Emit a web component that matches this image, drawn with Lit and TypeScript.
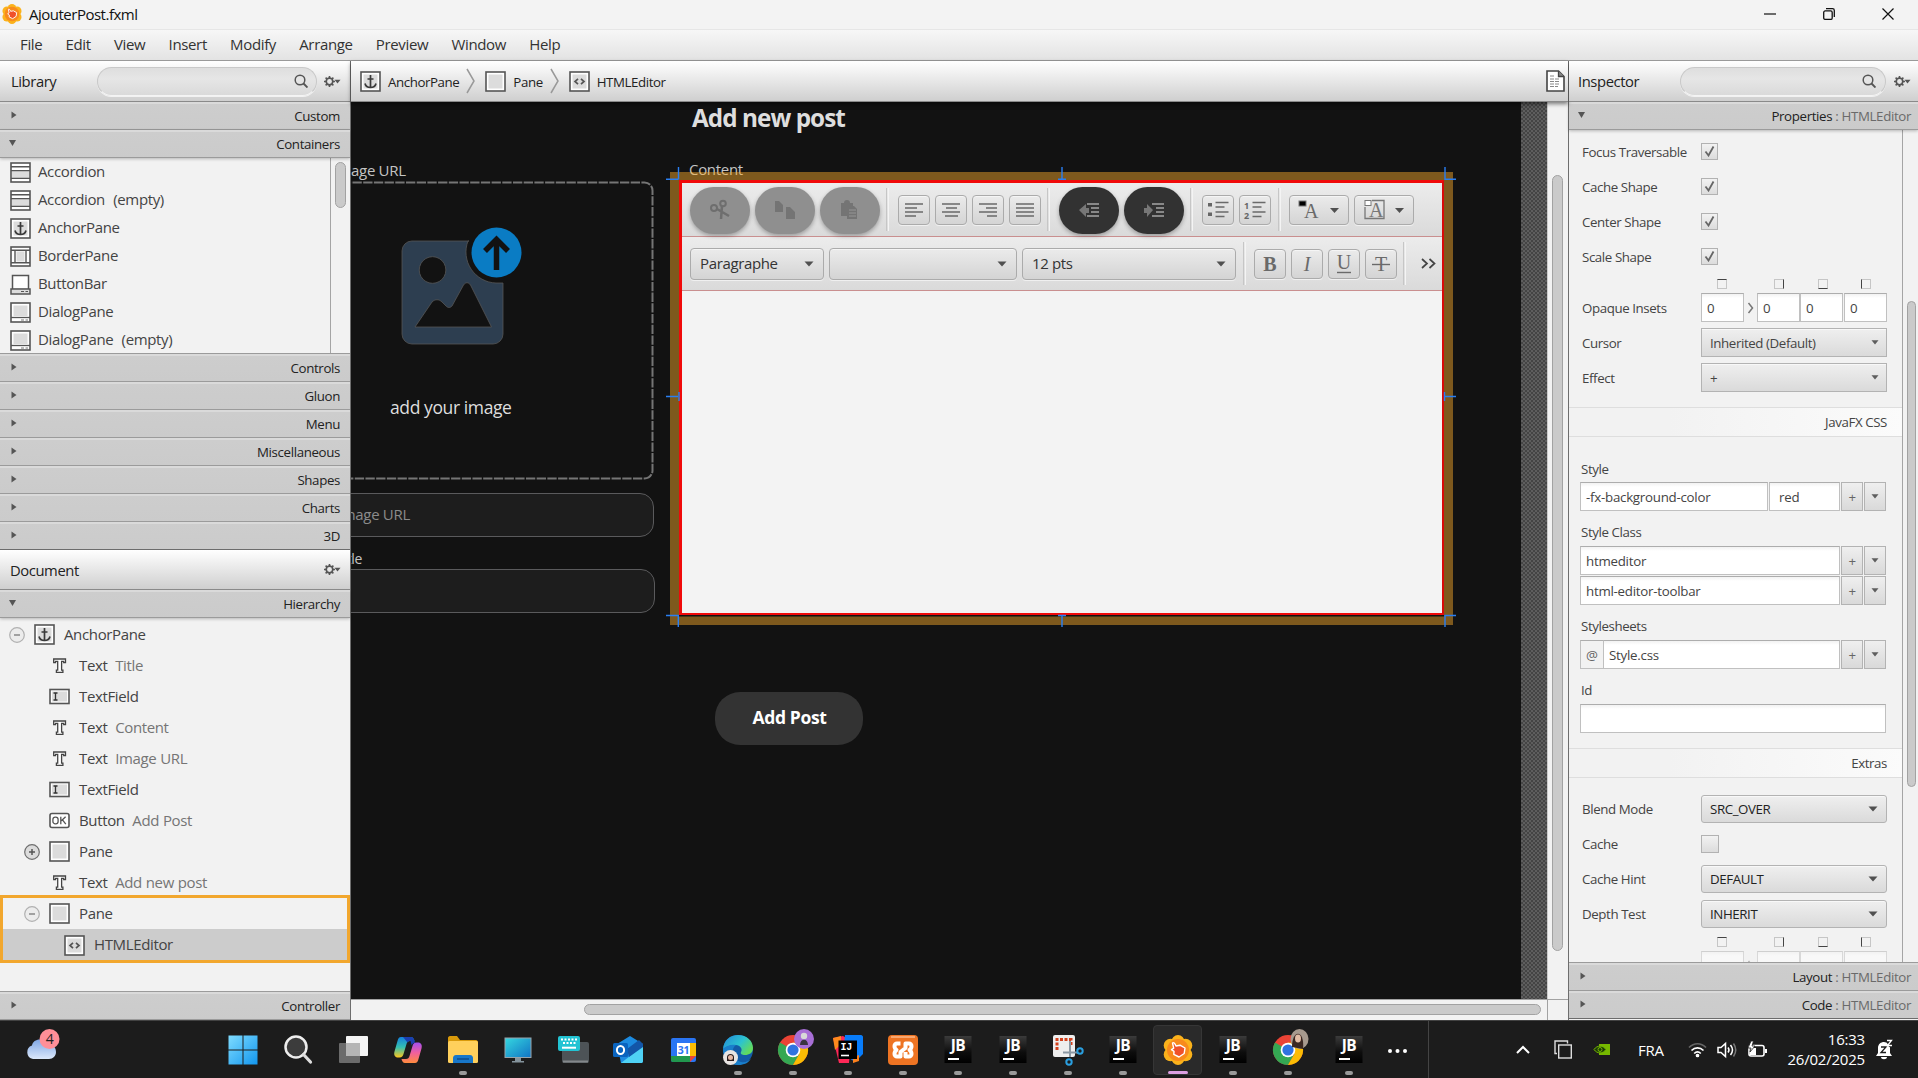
import { LitElement, html, css, svg, nothing } from "lit";
import { customElement, property } from "lit/decorators.js";

type Kind =
  | "accordion" | "anchor" | "border" | "buttonbar" | "dialog"
  | "pane" | "editor" | "text" | "field" | "button";

const glyph = (k: Kind) => {
  const frame = svg`<rect x="1" y="1" width="19" height="19" fill="#fff" stroke="#555" stroke-width="1.6"/>`;
  const inner = svg`<rect x="3.5" y="3.5" width="14" height="14" fill="#dcdcdc"/>`;
  switch (k) {
    case "accordion":
      return svg`${frame}<rect x="2" y="9" width="17" height="7" fill="#dcdcdc"/>
        <path d="M1 4.7h19M1 8.6h19M1 16.4h19" stroke="#555" stroke-width="1.4"/>`;
    case "anchor":
      return svg`${frame}${inner}<path d="M10.5 4v12.5M7.5 8h6M5 12.5c.6 2.600 2.600 4 5.500 4s4.900-1.400 5.500-4" fill="none" stroke="#3a3a3a" stroke-width="1.7"/>`;
    case "border":
      return svg`${frame}<rect x="6.500" y="5.500" width="8" height="10" fill="#dcdcdc"/>
        <path d="M1 4.200h19M1 16.800h19M5 4.200v12.600M16 4.200v12.600" stroke="#555" stroke-width="1.400"/>`;
    case "buttonbar":
      return svg`<rect x="2.500" y="1.500" width="16" height="14" fill="#fff" stroke="#555" stroke-width="1.500"/>
        <rect x="1" y="15" width="19" height="5" fill="#dcdcdc" stroke="#555" stroke-width="1.500"/><path d="M11 17.500h3M15.500 17.500h2.500" stroke="#555"/>`;
    case "dialog":
      return svg`${frame}<rect x="3.500" y="3.500" width="14" height="10.500" fill="#dcdcdc"/>
        <path d="M1 15.500h19" stroke="#555" stroke-width="1.300"/><path d="M11 18h3M15.500 18h2.500" stroke="#777"/>`;
    case "pane":
      return svg`${frame}${inner}`;
    case "editor":
      return svg`${frame}${inner}<path d="M9 7.800 6 10.500l3 2.700M12 7.800l3 2.700-3 2.700" fill="none" stroke="#555" stroke-width="1.700"/>`;
    case "text":
      return svg`<path d="M4.700 4h11.800v3.600h-1.800V6.400h-2.100v8.800h1.300v2.100H7.400v-2.100h1.300V6.400H6.500v1.200H4.700z" fill="#fff" stroke="#444" stroke-width="1.300"/>`;
    case "field":
      return svg`<rect x="1" y="3.500" width="19" height="14" fill="#fff" stroke="#555" stroke-width="1.600"/>
        <rect x="3" y="5.500" width="15" height="10" fill="#dcdcdc"/><path d="M4.500 7h4M6.500 7v7M4.500 14h4" stroke="#333" stroke-width="1.300"/>`;
    case "button":
      return svg`<rect x="1" y="3.500" width="19" height="14" rx="2" fill="#fff" stroke="#555" stroke-width="1.600"/>
        <rect x="3.900" y="7.200" width="5.200" height="6.600" rx="2.400" fill="none" stroke="#555" stroke-width="1.300"/>
        <path d="M11.800 6.800v7.400M16.600 6.800l-4.200 4M13.500 9.800l3.300 4.400" fill="none" stroke="#555" stroke-width="1.300"/>`;
  }
};

const icon = (k: Kind) => html`<svg class="ico" viewBox="0 0 21 21" width="21" height="21">${glyph(k)}</svg>`;

const gear = html`<svg class="gear" width="17" height="13" viewBox="0 0 17 13">
  <circle cx="5.500" cy="6.500" r="3.300" fill="none" stroke="#555" stroke-width="1.700"/>
  <path d="M5.500 1v2M5.500 10v2M0 6.500h2M9 6.500h2M1.600 2.600 3 4M8 9l1.400 1.400M9.400 2.600 8 4M3 9l-1.400 1.400" stroke="#555" stroke-width="1.600"/>
  <path d="M10.500 4.800h6l-3 3.800z" fill="#555"/></svg>`;

const lens = html`<svg class="lens" width="14" height="14" viewBox="0 0 14 14">
  <circle cx="6" cy="6" r="4.800" fill="none" stroke="#555" stroke-width="1.500"/><path d="m9.500 9.500 4 4" stroke="#555" stroke-width="1.900"/></svg>`;

const chrome = svg`<circle cx="15" cy="15" r="15" fill="#ea4335"/>
  <path d="M15 15 2 7.500A15 15 0 0 0 15 30l6.500-11.300z" fill="#34a853"/>
  <path d="M15 15l6.500 3.800L15 30A15 15 0 0 0 28 7.500H15z" fill="#fbbc04"/>
  <circle cx="15" cy="15" r="7.300" fill="#fff"/><circle cx="15" cy="15" r="5.600" fill="#2f73e0"/>`;

const flower = svg`<g fill="#fbb21b"><circle cx="15" cy="6.500" r="6.500"/><circle cx="15" cy="23.500" r="6.500"/><circle cx="7.500" cy="10.500" r="6.800"/><circle cx="22.500" cy="10.500" r="6.800"/><circle cx="7.500" cy="19.500" r="6.800"/><circle cx="22.500" cy="19.500" r="6.800"/></g>
  <circle cx="15" cy="15" r="11" fill="#f88a1c"/>
  <path d="M9.500 8c1-1 2.300 0 3.500 3l4-.8 5 2.800-.8 5.500-5.200 3.500-5.200-2.600.2-3-2.500-1.800 2.200-1.400z" fill="#f0512a" stroke="#fff" stroke-width="1.400" stroke-linejoin="round"/>`;

const TASKS: Record<string, unknown> = {
  start: svg`<defs><linearGradient id="w" x2="1" y2="1"><stop stop-color="#7fdcff"/><stop offset="1" stop-color="#1296ee"/></linearGradient></defs>
    <path d="M.5.500h14v14H.5zM15.500.500h14v14h-14zM.500 15.500h14v14H.500zM15.500 15.500h14v14h-14z" fill="url(#w)"/>`,
  search: svg`<circle cx="13" cy="12" r="10.500" fill="#3c3c3c" stroke="#eee" stroke-width="2.500"/><path d="m20.500 19.500 7 7.500" stroke="#ddd" stroke-width="3.200" stroke-linecap="round"/>`,
  view: svg`<rect x="1" y="8" width="21" height="20" rx="1" fill="#6b6b6b"/><rect x="8" y="1" width="22" height="20" rx="1" fill="#f4f4f4"/><path d="M8 8h14v13H8z" fill="#b5b5b5"/>`,
  copilot: svg`<defs><linearGradient id="c1" x2="0" y2="1"><stop stop-color="#1480dd"/><stop offset=".5" stop-color="#35c0b0"/><stop offset="1" stop-color="#ffc61b"/></linearGradient>
    <linearGradient id="c2" x2="0" y2="1"><stop stop-color="#a34ff0"/><stop offset=".5" stop-color="#f0609e"/><stop offset="1" stop-color="#ff8b3d"/></linearGradient></defs>
    <path d="M8 2h10c2 0 3 2 3.500 4H17c-2 0-3 1-3.500 3l-3 10c-.7 2-1.500 3.500-4 3.500H5c-3 0-4.500-2.500-3.500-6L4.500 6C5.200 3.300 6 2 8 2z" fill="url(#c1)"/>
    <path d="M22 28H12c-2 0-3-2-3.500-4H13c2 0 3-1 3.500-3l3-10c.7-2 1.500-3.500 4-3.500H25c3 0 4.500 2.500 3.500 6l-3 10.500c-.7 2.700-1.500 4-3.500 4z" fill="url(#c2)"/>
    <path d="M10 2h8c2 0 3 2 3.500 4l.7 1.700c-2.200.3-3 1.300-3.500 2.800L17.500 6c-1.500 0-2.500.500-3 1.500z" fill="#1b3fb0"/>`,
  folder: svg`<path d="M0 3c0-1 .8-2 2-2h7l3 4h16c1 0 2 1 2 2v4H0z" fill="#d99a0b"/><rect y="6" width="30" height="22" rx="1.500" fill="#ffd05c"/><path d="M5 28v-5c0-1.500 1-3 3-3h14c2 0 3 1.500 3 3v5z" fill="#1877c9"/><path d="M9 24h12" stroke="#0b4b8c" stroke-width="1.500"/>`,
  monitor: svg`<defs><linearGradient id="m" x2="1" y2="1"><stop stop-color="#35d8e0"/><stop offset="1" stop-color="#1173c4"/></linearGradient></defs>
    <path d="M12 22h6v4h3v1.500H9V26h3z" fill="#84939c"/><rect x="2" y="3" width="26" height="19.500" fill="url(#m)" stroke="#98a4ab" stroke-width="1"/>`,
  keys: svg`<rect x="4" y="7" width="27" height="21" rx="2" fill="#4d5357"/><path d="M5 26.500h25" stroke="#84888b" stroke-width="2"/>
    <rect x="0" y="1" width="22" height="15" rx="2" fill="#22c3d3"/><path d="M3 4.500h16M5 8h13" stroke="#fff" stroke-width="2" stroke-dasharray="2 1.500"/><path d="M4 12.700h14" stroke="#fff" stroke-width="2"/>`,
  outlook: svg`<path d="M4 9 17 1l13 8v17c0 1.500-1 2-2 2H8z" fill="#1c8be0"/><path d="m8 28 22-17v15c0 1.500-1 2-2 2z" fill="#4fd2f5"/><path d="M14 14 26 5l4 4v3L16 22z" fill="#1356a8"/><rect x="0" y="8" width="15" height="14" rx="1.500" fill="#0a64bf"/><ellipse cx="7.500" cy="15" rx="3.600" ry="4" fill="none" stroke="#fff" stroke-width="2"/>`,
  calendar: svg`<rect x="3" y="3" width="25" height="24" rx="2" fill="#2a75f3"/><path d="M22 8h6v13h-6z" fill="#fbbc04"/><path d="M3 21h19v6H5c-1.200 0-2-.8-2-2z" fill="#21974e"/><path d="M22 21h6l-6 6z" fill="#ea4335"/><path d="M9 8h13v13H9z" fill="#fff"/><text x="15.500" y="18.500" text-anchor="middle" class="cal">31</text>`,
  edge: svg`<defs><linearGradient id="e" x2="1" y2=".6"><stop stop-color="#2387d8"/><stop offset=".6" stop-color="#2cc3d0"/><stop offset="1" stop-color="#62db5c"/></linearGradient></defs>
    <circle cx="15" cy="15" r="15" fill="#135ca8"/><path d="M0 14C1 5 7 0 15 0c9 0 15 6 15 13 0 5-4 7-8 7-3 0-5-1-4-3 2-3-1-7-5-7-5 0-9 1-13 4z" fill="url(#e)"/>
    <path d="M13 10c-5 3-5 14 5 17 4 1 8-1 10-4-2 5-7 7-13 7C6 30 0 23 0 14c3-3 8-5 13-4z" fill="#1a7fcb"/>
    <circle cx="7.500" cy="22.500" r="7.500" fill="#e9e4e2"/><path d="M4 22c0-4 7-4 7 0v4H4z" fill="#2a1d1d"/><circle cx="7.500" cy="22.500" r="2.500" fill="#e6b8a4"/>`,
  chromeA: svg`${chrome}<circle cx="26" cy="4" r="10" fill="#a86fd6"/><circle cx="26" cy="1" r="3.200" fill="#d8d8d8"/><path d="M22 10c0-7 8-7 8 0z" fill="#3a3440"/>`,
  idea: svg`<path d="M0 3 10 1l8 5-2 22-10 0z" fill="#fe2857"/><path d="M0 3 8 1v8L2 15z" fill="#ff8a1d"/><path d="M12 0h16c1 0 2 1 2 2v17l-8 8-12-8z" fill="#087cfa"/><path d="m20 22 6-2v6l-6 2z" fill="#fc801d"/><rect x="5.500" y="5.500" width="18.500" height="18.500" fill="#000"/><text x="7.500" y="15" class="ij">IJ</text><path d="M8 20.500h8" stroke="#fff" stroke-width="1.600"/>`,
  xampp: svg`<rect width="30" height="30" rx="4" fill="#ee7423"/><path d="M3 2h24" stroke="#fbb98b" stroke-width="1.500"/><path d="M12.500 8.500H9a2.500 2.500 0 0 0-2.500 2.500c0 2 .500 3 2 4-1.500 1-2 2-2 4A2.500 2.500 0 0 0 9 21.500h3.500V17l5-4V8.500H21a2.500 2.500 0 0 1 2.500 2.500c0 2-.5 3-2 4 1.500 1 2 2 2 4a2.500 2.500 0 0 1-2.500 2.500h-3.500V17" fill="none" stroke="#fff" stroke-width="4" stroke-linejoin="round"/>`,
  jb: svg`<defs><linearGradient id="j" x2="0" y2="1"><stop stop-color="#3b3b3b"/><stop offset=".6" stop-color="#0d0d0d"/><stop offset="1" stop-color="#000"/></linearGradient></defs>
    <rect x="1.500" y="1" width="27" height="27" fill="url(#j)"/><text x="15" y="16" text-anchor="middle" class="jb">JB</text><path d="M5 24h11" stroke="#fff" stroke-width="2"/>`,
  snip: svg`<rect x="0" y="0" width="22" height="22" rx="2" fill="#eee"/><path d="M4 15V4.500h14V10" fill="none" stroke="#d3401c" stroke-width="3" stroke-dasharray="3 1.500"/><path d="M17 6v16M10 17.500h15" stroke="#8b98a3" stroke-width="2"/><circle cx="27" cy="16" r="2.700" fill="none" stroke="#2a9fe0" stroke-width="2"/><circle cx="16" cy="27" r="2.700" fill="none" stroke="#2a9fe0" stroke-width="2"/>`,
  builder: flower,
  chromeB: svg`${chrome}<ellipse cx="26.500" cy="4" rx="9" ry="10" fill="#a79a8e"/><path d="M19 12c0-18 13-18 11 2z" fill="#3b2822"/><ellipse cx="25" cy="3.500" rx="3" ry="4" fill="#e2bda6"/>`,
};

@customElement("section-bar")
class SectionBar extends LitElement {
  @property() label = "";
  @property() target = "";
  @property({ type: Boolean }) open = false;
  @property({ type: Boolean }) last = false;
  static styles = css`
    :host { display: block; height: 28px; flex: none; position: relative; z-index: 1; }
    .bar { box-sizing: border-box; height: 28px; display: flex; align-items: center; justify-content: space-between;
      padding: 1px 10px 0 10px; background: linear-gradient(#dadada 0 2px, #cdcdcd 2px, #cbcbcb); border-bottom: 1px solid #9b9b9b; }
    .bar.open { box-shadow: 0 1px 3px rgba(0,0,0,.25); padding-left: 8px; }
    .bar.last { border-bottom-color: #6c6c6c; }
    .bar.named { padding-right: 7px; }
    .tri { margin-top: -2px; }
    .label { font: 13.300px/20px "Open Sans", sans-serif; letter-spacing: -.36px; color: #222; white-space: pre; }
    .dim { color: #6a6a6a; }
  `;
  render() {
    return html`<div class="bar ${this.open ? "open" : ""} ${this.last ? "last" : ""} ${this.target ? "named" : ""}">
      <svg class="tri" width="8" height="8"><path d=${this.open ? "M1 1h7L4.500 7z" : "M1.500 .5v7L6.500 4z"} fill="#555"/></svg>
      <span class="label">${this.label}${this.target ? html`<span class="dim"> : ${this.target}</span>` : nothing}</span>
    </div>`;
  }
}

const panel = css`
  * { box-sizing: border-box; }
  .head { height: 41px; flex: none; display: flex; align-items: center; background: linear-gradient(#fff, #cfcfcf);
    border-bottom: 1px solid #8a8a8a; position: relative; z-index: 2; }
  .head .name { font-size: 14.800px; letter-spacing: -.42px; color: #222; }
  .search { height: 29px; border-radius: 15px; display: flex; align-items: center; justify-content: flex-end;
    background: linear-gradient(#dedede, #e6e6e6 40%, #dadada); border: 1px solid #c9c9c9; border-bottom-color: #f4f4f4; box-shadow: 0 1px 0 #f2f2f2; }
  .ico, .gear, .lens, svg { display: block; flex: none; }
`;

@customElement("left-dock")
class LeftDock extends LitElement {
  static styles = [panel, css`
    :host { display: flex; flex-direction: column; width: 351px; height: 959px; border-right: 1px solid #6e6e6e; box-sizing: border-box;
      font-family: "Open Sans", sans-serif; font-size: 15px; letter-spacing: -.36px; color: #444; background: #f2f2f2; }
    .head { padding: 0 9px 0 11px; }
    .head .search { width: 220px; margin-left: auto; margin-right: 7px; padding-right: 8px; }
    .doc { height: 40px; justify-content: space-between; padding-left: 10px; }
    .library { height: 196px; flex: none; display: flex; border-bottom: 1px solid #9b9b9b; overflow: hidden; }
    .items { width: 331px; border-right: 1px solid #a5a5a5; }
    .item { height: 28px; display: flex; align-items: center; gap: 7px; padding-left: 10px; white-space: pre; word-spacing: .6px; }
    .item span, .node > span { padding-bottom: 2px; }
    .rail { flex: 1; padding: 4px 0 0 4px; }
    .thumb { width: 11px; height: 46px; border-radius: 6px; background: #cacaca; border: 1px solid #a2a2a2; }
    .tree { height: 374px; flex: none; border-bottom: 1px solid #9b9b9b; position: relative; padding-top: 1px; }
    .node { height: 31px; display: flex; align-items: center; gap: 9px; white-space: pre; word-spacing: .3px; }
    .node .fold { width: 16px; }
    .d0 { padding-left: 9px; } .d1 { padding-left: 24px; } .d2 { padding-left: 39px; }
    .picked { background: #ccc; height: 32px; }
    .dim { color: #757575; }
    .ring { position: absolute; left: 0; top: 277px; width: 350px; height: 68px; border: 3px solid #f2a72e; }
  `];
  fold(s: string) {
    return s === "" ? html`<span class="fold"></span>` : html`<svg class="fold" width="16" height="16" viewBox="0 0 16 16">
      <circle cx="8" cy="8" r="7.300" fill=${s === "+" ? "#dcdcdc" : "#ececec"} stroke=${s === "+" ? "#6e6e6e" : "#b0b0b0"} stroke-width="1.200"/>
      <path d=${s === "+" ? "M5 8h6M8 5v6" : "M5 8h6"} stroke=${s === "+" ? "#555" : "#888"} stroke-width="1.500"/></svg>`;
  }
  render() {
    const lib: [Kind, string][] = [["accordion", "Accordion"], ["accordion", "Accordion  (empty)"], ["anchor", "AnchorPane"],
      ["border", "BorderPane"], ["buttonbar", "ButtonBar"], ["dialog", "DialogPane"], ["dialog", "DialogPane  (empty)"]];
    const tree: [number, string, Kind, string, string?][] = [[0, "-", "anchor", "AnchorPane"], [1, "", "text", "Text", "Title"], [1, "", "field", "TextField"],
      [1, "", "text", "Text", "Content"], [1, "", "text", "Text", "Image URL"], [1, "", "field", "TextField"], [1, "", "button", "Button", "Add Post"],
      [1, "+", "pane", "Pane"], [1, "", "text", "Text", "Add new post"], [1, "-", "pane", "Pane"], [2, "", "editor", "HTMLEditor"]];
    return html`
      <div class="head"><span class="name">Library</span><div class="search">${lens}</div>${gear}</div>
      <section-bar label="Custom"></section-bar>
      <section-bar label="Containers" open></section-bar>
      <div class="library">
        <div class="items">${lib.map(([k, t]) => html`<div class="item">${icon(k)}<span>${t}</span></div>`)}</div>
        <div class="rail"><div class="thumb"></div></div>
      </div>
      ${["Controls", "Gluon", "Menu", "Miscellaneous", "Shapes", "Charts", "3D"].map((t) => html`<section-bar label=${t} ?last=${t === "3D"}></section-bar>`)}
      <div class="head doc"><span class="name">Document</span>${gear}</div>
      <section-bar label="Hierarchy" open></section-bar>
      <div class="tree">
        ${tree.map(([d, f, k, a, b]) => html`<div class="node d${d} ${k === "editor" ? "picked" : ""}">${this.fold(f)}${icon(k)}<span>${a}${b ? html`<span class="dim">  ${b}</span>` : nothing}</span></div>`)}
        <div class="ring"></div>
      </div>
      <section-bar label="Controller"></section-bar>`;
  }
}

@customElement("html-editor")
class HtmlEditor extends LitElement {
  static styles = css`
    * { box-sizing: border-box; }
    :host { display: block; font: 15px "Open Sans", sans-serif; letter-spacing: -.36px; color: #333; }
    .frame { height: 100%; border: solid #f00a0a; border-width: 3px 2px 2px 3px; border-right-color: #d80a0a; background: #f3f3f3; overflow: hidden; }
    .bar { height: 54px; display: flex; align-items: center; padding-left: 8px; background: linear-gradient(#ececec, #dadada); border-bottom: 1px solid #c98f8f; }
    .sep { width: 3px; height: 43px; border: solid #c6c6c6; border-width: 0 0 0 1px; border-right: 1px solid #f4f4f4; flex: none; }
    .blob { width: 60px; height: 47px; border-radius: 24px; background: #8f8f8f; margin: 1px 5px 0 0; display: flex; align-items: center; justify-content: center; box-shadow: 0 2px 4px rgba(0,0,0,.3); flex: none; }
    .dark { background: #323232; }
    .btn, .combo { height: 30px; width: 32px; border: 1px solid #ababab; border-radius: 4px; background: linear-gradient(#ebebeb, #d4d4d4); margin-right: 5px;
      box-shadow: inset 0 1px 0 #f5f5f5, 0 1px 0 #f0f0f0; display: flex; align-items: center; justify-content: center; flex: none; }
    .wide { width: 60px; }
    .combo { height: 32px; justify-content: space-between; padding: 0 9px; width: auto; }
    .combo span { padding-bottom: 1px; }
    svg { display: block; overflow: visible; }
    .serif { font: 20px "Liberation Serif", serif; letter-spacing: 0; }
    .bold { font-weight: 700; } .ital { font-style: italic; }
  `;
  lines(d: string) { return html`<div class="btn"><svg width="20" height="16"><path d=${d} stroke="#6a6a6a" stroke-width="1.400"/></svg></div>`; }
  render() {
    const tri = html`<svg width="10" height="6"><path d="M.5.500h9L5 5.500z" fill="#505050"/></svg>`;
    const sep = (l: number, r: number) => html`<div class="sep" style="margin:0 ${r}px 0 ${l}px"></div>`;
    return html`<div class="frame">
      <div class="bar">
        <div class="blob"><svg width="20" height="20" fill="none" stroke="#6e6e6e" stroke-width="2"><circle cx="4" cy="8" r="3"/><circle cx="13" cy="3.500" r="2.800"/><path d="M7 9l12 7M12 6l-1 13" stroke-width="2.500"/></svg></div>
        <div class="blob"><svg width="22" height="20" fill="#747474"><path d="M1 1h4l4 4v7H1zM12 7h4l5 5v7h-9z"/></svg></div>
        <div class="blob"><svg width="20" height="20" fill="#747474"><path d="M1 3h3a3 3 0 0 1 6 0h3v4H9v9H1z"/><path d="M7 6h7l3 3v10H7z"/><path d="M9 10h7M9 13h7M9 16h7" stroke="#959595"/></svg></div>
        ${sep(1, 9)}
        ${this.lines("M1 2h18M1 6h12M1 10h18M1 14h11")}${this.lines("M1 2h18M5 6h11M1 10h18M4 14h13")}${this.lines("M1 2h18M8 6h11M1 10h18M9 14h10")}${this.lines("M1 2h18M1 6h18M1 10h18M1 14h18")}
        ${sep(1, 9)}
        <div class="blob dark"><svg width="20" height="16" fill="#777"><path d="M0 8l7-6v4h3v5H7v4z"/><path d="M8 2h12M12 6h8M12 10h8M8 14h12" stroke="#888" stroke-width="2"/></svg></div>
        <div class="blob dark"><svg width="20" height="16" fill="#777"><path d="M9 8 3 2v4H0v5h3v4z"/><path d="M8 2h12M12 6h8M12 10h8M8 14h12" stroke="#888" stroke-width="2"/></svg></div>
        ${sep(1, 9)}
        <div class="btn"><svg width="22" height="18"><path d="M1 2h4v3.500H1zM1 11.500h4v3.500H1z" fill="#666"/><path d="M8.500 1.500h13M8.500 6h9M8.500 11h13M8.500 15.500h9" stroke="#6a6a6a" stroke-width="1.400"/></svg></div>
        <div class="btn"><svg width="22" height="20"><path d="M8.500 2.500h13M8.500 7h9M8.500 12h13M8.500 16.500h9" stroke="#6a6a6a" stroke-width="1.400"/><text x="0" y="8.500" font-size="9" font-weight="700" fill="#666">1</text><text x="0" y="19" font-size="9" font-weight="700" fill="#666">2</text></svg></div>
        ${sep(2, 8)}
        <div class="btn wide"><svg width="40" height="22"><rect x="0" y="2" width="7" height="5" fill="#000" stroke="#777"/><text x="5" y="18.500" class="serif" fill="#6a6a6a">A</text><path d="M31 9h9l-4.500 5z" fill="#505050"/></svg></div>
        <div class="btn wide"><svg width="40" height="22"><path d="M8 1.500h12v18H1V8" fill="none" stroke="#777" stroke-width="1.300"/><rect x="1" y="1.500" width="6" height="5" fill="#fff" stroke="#777"/><text x="5" y="17.500" class="serif" fill="#777">A</text><path d="M31 9h9l-4.500 5z" fill="#505050"/></svg></div>
      </div>
      <div class="bar">
        <div class="combo" style="width:134px"><span>Paragraphe</span>${tri}</div>
        <div class="combo" style="width:188px"><span></span>${tri}</div>
        <div class="combo" style="width:214px"><span>12 pts</span>${tri}</div>
        ${sep(2, 8)}
        <div class="btn"><svg width="20" height="22"><text x="10" y="17.500" text-anchor="middle" class="serif bold" fill="#6a6a6a">B</text></svg></div>
        <div class="btn"><svg width="20" height="22"><text x="10" y="17.500" text-anchor="middle" class="serif ital" fill="#6a6a6a">I</text></svg></div>
        <div class="btn"><svg width="20" height="22"><text x="10" y="16" text-anchor="middle" class="serif" fill="#6a6a6a">U</text><path d="M3 19.500h14" stroke="#6a6a6a" stroke-width="1.400"/></svg></div>
        <div class="btn"><svg width="20" height="22"><text x="10" y="17.500" text-anchor="middle" class="serif" fill="#6a6a6a">T</text><path d="M1 11.500h18" stroke="#6a6a6a" stroke-width="1.400"/></svg></div>
        ${sep(1, 15)}
        <svg width="15" height="11" fill="none" stroke="#444" stroke-width="1.700"><path d="m1 1 5 4.500L1 10M8.500 1l5 4.500-5 4.500"/></svg>
      </div>
    </div>`;
  }
}

@customElement("design-stage")
class DesignStage extends LitElement {
  static styles = [panel, css`
    :host { display: flex; flex-direction: column; width: 1218px; height: 959px; font-family: "Open Sans", sans-serif; font-size: 13.300px; letter-spacing: -.42px; color: #222; border-right: 1px solid #6e6e6e; box-sizing: border-box; }
    .head { padding: 0 3px 0 9px; gap: 7px; box-shadow: 0 2px 4px rgba(0,0,0,.5); }
    .head .ico + span { padding-top: 1px; }
    .head .chev { margin-right: 3px; }
    .head .page { margin-left: auto; }
    .mid { height: 897px; display: flex; }
    .stage { width: 1170px; position: relative; overflow: hidden; background: #121212; color: #c4c4c4; font-size: 15px; letter-spacing: -.3px; }
    .mesh { width: 26px; background: repeating-conic-gradient(#5e5e5e 0 25%, #444 0 50%) 0 0/4px 4px; }
    .vrail { flex: 1; background: #f2f2f2; border-left: 1px solid #ccc; padding: 73px 0 0 4px; }
    .vthumb { width: 11px; height: 776px; border-radius: 6px; background: #cacaca; border: 1px solid #a2a2a2; }
    .hrail { height: 21px; background: #f2f2f2; border-top: 1px solid #a2a2a2; display: flex; }
    .hlane { width: 1197px; border-right: 1px solid #a2a2a2; padding: 4px 0 0 233px; height: 20px; }
    .hthumb { width: 957px; height: 11px; border-radius: 6px; background: #cacaca; border: 1px solid #a2a2a2; }
    .abs { position: absolute; white-space: pre; line-height: 20px; }
    .input { position: absolute; background: #1d1d1d; border: 1px solid #5a5a5c; border-radius: 14px; height: 44px; }
    .post { position: absolute; left: 364px; top: 590px; width: 148px; height: 53px; border-radius: 25px; background: #333; color: #fff; font-weight: 700; font-size: 17.500px; letter-spacing: -.35px;
      display: flex; align-items: center; justify-content: center; padding-bottom: 3px; padding-left: 1px; }
    .h1 { font-weight: 700; font-size: 24.300px; letter-spacing: -.95px; color: #dedede; }
    .lay { position: absolute; left: 0; top: 0; }
    html-editor { position: absolute; left: 328px; top: 78px; width: 765px; height: 434.500px; }
  `];
  render() {
    const chev = html`<svg class="chev" width="9" height="26" fill="none" stroke="#999" stroke-width="1.500"><path d="M1 1l7 12-7 12"/></svg>`;
    return html`
      <div class="head">${icon("anchor")}<span>AnchorPane</span>${chev}${icon("pane")}<span>Pane</span>${chev}${icon("editor")}<span>HTMLEditor</span>
        <svg class="page" width="19" height="22" viewBox="0 0 19 22"><path d="M1 1h11.500l5.500 5.500V21H1z" fill="#fff" stroke="#444" stroke-width="1.600"/><path d="M12.500 1v5.500H18" fill="#888" stroke="#444" stroke-width="1.300"/><path d="M4 6h5M4 9h10M4 11.500h9M4 14h10M4 16.500h8" stroke="#888" stroke-width="1" stroke-dasharray="4 1"/></svg>
      </div>
      <div class="mid">
        <div class="stage">
          <span class="abs" style="left:0;top:58px">age URL</span>
          <svg class="lay" width="320" height="390"><rect x="-60" y="80.500" width="361.500" height="296" rx="8" fill="none" stroke="#757575" stroke-width="2" stroke-dasharray="9.300 1.400"/>
            <path fill-rule="evenodd" fill="#2d3e50" stroke="#555" stroke-width=".8" d="M61 139h57l-1 0a31 31 0 0 0 28 42h7v51a10 10 0 0 1-10 10H61a10 10 0 0 1-10-10v-83a10 10 0 0 1 10-10zM64 225h76.500L119.500 183c-2-3-5-3-7 0L101 204c-2 2-4 2-6 0l-4-4c-3-3-7-3-10 0zM81.500 154.700a13.300 13.300 0 1 0 .1 0z"/>
            <circle cx="145.500" cy="150.500" r="25" fill="#0a7cc4"/><path d="M145.500 168v-28M134 149l11.500-11.500L157 149" fill="none" stroke="#121212" stroke-width="5.500"/></svg>
          <span class="abs" style="left:39px;top:295px;font-size:17.500px;letter-spacing:-.4px;color:#dedede">add your image</span>
          <div class="input" style="left:-60px;top:390.500px;width:362.500px"></div>
          <span class="abs" style="right:1111px;top:402px;color:#8b8b8b">Image URL</span>
          <span class="abs" style="right:1159px;top:447px;font-size:14px">Title</span>
          <div class="input" style="left:-60px;top:466.500px;width:363.500px"></div>
          <span class="abs h1" style="left:341px;top:6px">Add new post</span>
          <span class="abs" style="left:338px;top:57px">Content</span>
          <svg class="lay" width="1170" height="640"><path fill-rule="evenodd" fill="#ffae2c" fill-opacity=".46" d="M319 70h783v453H319zM328 78.500v436h765v-436z"/></svg>
          <html-editor></html-editor>
          <svg class="lay" width="1170" height="640" fill="none" stroke="#2a7ff2" stroke-width="1.400">
            <path d="M315 77.200h12.300M327.500 65v12.500M711 65v12M707 77.200h8M1094 65v12.200h11M315 294.500h12M328 290v9M1093.500 290v9M1094 294.500h11M315 513.500h12.300V525M711 514v11M707 513.500h8M1105 513.500h-11V525"/></svg>
          <div class="post">Add Post</div>
        </div>
        <div class="mesh"></div>
        <div class="vrail"><div class="vthumb"></div></div>
      </div>
      <div class="hrail"><div class="hlane"><div class="hthumb"></div></div></div>`;
  }
}

@customElement("inspector-dock")
class InspectorDock extends LitElement {
  static styles = [panel, css`
    :host { display: flex; flex-direction: column; width: 349px; height: 959px; font-family: "Open Sans", sans-serif; font-size: 13.300px; letter-spacing: -.4px; color: #444; background: #f2f2f2; box-sizing: border-box; }
    .head { padding: 0 7px 0 9px; }
    .head .search { width: 206px; margin-left: auto; margin-right: 8px; padding-right: 9px; }
    .body { height: 833px; flex: none; display: flex; overflow: hidden; border-bottom: 1px solid #9b9b9b; }
    .col { width: 334px; border-right: 1px solid #a5a5a5; flex: none; padding-top: 4px; }
    .rail { padding: 171px 0 0 4px; }
    .thumb { width: 9px; height: 486px; border-radius: 5px; background: #cacaca; border: 1px solid #a2a2a2; }
    .row { height: 35px; display: flex; align-items: center; padding-left: 13px; }
    .row .k { width: 119px; white-space: nowrap; }
    .check { width: 17px; height: 17px; border: 1px solid #b2b2b2; background: linear-gradient(#f2f2f2, #dcdcdc); display: flex; align-items: center; justify-content: center; }
    .box { width: 18px; height: 18px; }
    .sides { height: 20px; padding: 9px 0 0 147px; display: flex; }
    .sides i { width: 10px; height: 10px; border: 1px solid #c6c6c6; }
    .sides .t { border-top-color: #444; margin: 0 47px 0 1px; } .sides .r { border-right-color: #444; margin-right: 34px; }
    .sides .b { border-bottom-color: #444; margin-right: 33px; } .sides .l { border-left-color: #444; }
    .in { height: 29px; background: linear-gradient(#f2f2f2, #fff 4px); border: 1px solid #c0c0c0; border-top-color: #adadad; display: flex; align-items: center; padding-left: 5px; flex: none; letter-spacing: -.25px; }
    .drop { width: 186px; height: 29px; border: 1px solid #b3b3b3; background: linear-gradient(#efefef, #dadada); box-shadow: inset 0 1px 0 #f8f8f8; display: flex; align-items: center; justify-content: space-between; padding: 0 7px 0 8px; }
    .pick { border-radius: 3px; height: 28px; color: #222; padding-right: 8px; }
    .band { height: 30px; border: solid #dedede; border-width: 1px 0; background: linear-gradient(90deg, #f2f2f2 30%, #fbfbfb); display: flex; align-items: center; justify-content: flex-end; padding-right: 15px; }
    .cap { height: 20px; line-height: 20px; padding-left: 12px; }
    .line { display: flex; padding-left: 11px; gap: 1px; height: 29px; }
    .mini { width: 22px; height: 29px; border: 1px solid #b3b3b3; background: linear-gradient(#efefef, #d9d9d9); display: flex; align-items: center; justify-content: center; color: #666; }
  `];
  sides() { return html`<div class="sides"><i class="t"></i><i class="r"></i><i class="b"></i><i class="l"></i></div>`; }
  field(w: number, t: string, pad = 5) { return html`<div class="in" style="width:${w}px;padding-left:${pad}px">${t}</div>`; }
  render() {
    const tick = html`<svg width="11" height="11" fill="none" stroke="#666" stroke-width="1.800"><path d="m1.500 5.500 3 4 5-9"/></svg>`;
    const tri = html`<svg width="8" height="5"><path d="M.5.200h7L4 4.500z" fill="#5e5e5e"/></svg>`;
    const big = html`<svg width="10" height="6"><path d="M.5.500h9L5 5.500z" fill="#505050"/></svg>`;
    const more = html`<div class="mini">+</div><div class="mini">${tri}</div>`;
    const gt = html`<svg width="13" height="12" fill="none" stroke="#777" stroke-width="1.500"><path d="m4.500 1 4 5-4 5"/></svg>`;
    return html`
      <div class="head"><span class="name">Inspector</span><div class="search">${lens}</div>${gear}</div>
      <section-bar label="Properties" target="HTMLEditor" open></section-bar>
      <div class="body">
        <div class="col">
          ${["Focus Traversable", "Cache Shape", "Center Shape", "Scale Shape"].map((t) => html`<div class="row"><span class="k">${t}</span><div class="check">${tick}</div></div>`)}
          <div style="margin-top:-4px">${this.sides()}</div>
          <div class="row"><span class="k">Opaque Insets</span>${this.field(43, "0")}${gt}${this.field(43, "0")}${this.field(43, "0")}<span style="width:1px"></span>${this.field(43, "0")}</div>
          <div class="row"><span class="k">Cursor</span><div class="drop"><span>Inherited (Default)</span>${tri}</div></div>
          <div class="row"><span class="k">Effect</span><div class="drop"><span>+</span>${tri}</div></div>
          <div class="band" style="margin-top:12px">JavaFX CSS</div>
          <div class="cap" style="margin-top:22px">Style</div>
          <div class="line" style="margin-top:3px">${this.field(188, "-fx-background-color")}${this.field(71, "red", 9)}${more}</div>
          <div class="cap" style="margin-top:11px">Style Class</div>
          <div class="line" style="margin-top:4px">${this.field(260, "htmeditor")}${more}</div>
          <div class="line" style="margin-top:1px">${this.field(260, "html-editor-toolbar")}${more}</div>
          <div class="cap" style="margin-top:11px">Stylesheets</div>
          <div class="line" style="margin-top:4px"><div class="in" style="width:24px;margin-right:-2px;background:#f2f2f2;color:#666;border-right:0">@</div>${this.field(237, "Style.css")}${more}</div>
          <div class="cap" style="margin-top:11px">Id</div>
          <div class="line" style="margin-top:4px">${this.field(306, "")}</div>
          <div class="band" style="margin-top:15px;margin-bottom:13px">Extras</div>
          <div class="row"><span class="k">Blend Mode</span><div class="drop pick"><span>SRC_OVER</span>${big}</div></div>
          <div class="row"><span class="k">Cache</span><div class="check box"></div></div>
          <div class="row"><span class="k">Cache Hint</span><div class="drop pick"><span>DEFAULT</span>${big}</div></div>
          <div class="row"><span class="k">Depth Test</span><div class="drop pick"><span>INHERIT</span>${big}</div></div>
          <div style="margin-top:-3px">${this.sides()}</div>
          <div class="row" style="opacity:.5"><span class="k"></span>${this.field(43, "")}${gt}${this.field(43, "")}${this.field(43, "")}<span style="width:1px"></span>${this.field(43, "")}</div>
        </div>
        <div class="rail"><div class="thumb"></div></div>
      </div>
      <section-bar label="Layout" target="HTMLEditor"></section-bar>
      <section-bar label="Code" target="HTMLEditor" last></section-bar>`;
  }
}

@customElement("task-bar")
class TaskBar extends LitElement {
  static styles = css`
    * { box-sizing: border-box; }
    :host { display: flex; height: 58px; box-sizing: border-box; background: #1c1c1c; border-top: 1px solid #424242; color: #fff; font: 15px "Open Sans", sans-serif; letter-spacing: -.3px; }
    svg { display: block; overflow: visible; flex: none; }
    .weather { width: 215px; padding: 11px 0 0 25px; }
    .apps { display: flex; width: 1214px; border-right: 1px solid #444; padding-top: 4px; height: 57px; }
    .app { width: 55px; display: flex; flex-direction: column; align-items: center; }
    .app .pic { width: 49px; height: 50px; padding-top: 10px; border-radius: 4px; display: flex; flex-direction: column; align-items: center; gap: 5px; }
    .on .pic { background: #2a2a2a; border: 1px solid #363636; padding-top: 9px; }
    .dot { width: 8px; height: 4px; border-radius: 2px; background: #9a9a9a; }
    .on .dot { width: 20px; background: #dc9fe2; }
    .lastapp { margin-left: 6px; }
    .tray { flex: 1; display: flex; align-items: center; padding-left: 87px; }
    .clock { text-align: right; line-height: 20.500px; width: 97px; letter-spacing: -.2px; padding-bottom: 1px; }
    .jb { font: 700 15.500px "Open Sans", sans-serif; fill: #fff; letter-spacing: -.5px; }
    .ij { font: 700 10px "Liberation Mono", monospace; fill: #fff; }
    .cal { font: 700 10.500px "Open Sans", sans-serif; fill: #2a75f3; }
  `;
  render() {
    const apps = ["start", "search", "view", "copilot", "folder", "monitor", "keys", "outlook", "calendar", "edge", "chromeA", "idea", "xampp", "jb", "jb", "snip", "jb", "builder", "jb", "chromeB", "jb"];
    return html`
      <div class="weather"><svg width="34" height="30"><defs><linearGradient id="k" x2="0" y2="1"><stop stop-color="#7fa6e4"/><stop offset="1" stop-color="#dbe8fb"/></linearGradient></defs>
        <path d="M8 27a7 7 0 0 1-1-13.500C8 6 20 5 22 13c5-2 9 2 9 7 0 4-3 7-7 7z" fill="url(#k)"/><circle cx="24.500" cy="7" r="10" fill="#ff8f98"/><text x="24.500" y="12" text-anchor="middle" font-size="14" fill="#222">4</text></svg></div>
      <div class="apps">
        ${apps.map((a, i) => html`<div class="app ${a === "builder" ? "on" : ""} ${i === 20 ? "lastapp" : ""}"><div class="pic">
          <svg width="30" height="31" viewBox="0 0 30 31">${TASKS[a]}</svg>${i === 4 || i > 8 ? html`<div class="dot"></div>` : nothing}</div></div>`)}
        <svg width="44" height="50" fill="#fff"><circle cx="14" cy="26" r="2"/><circle cx="21.500" cy="26" r="2"/><circle cx="29" cy="26" r="2"/></svg>
      </div>
      <div class="tray">
        <svg width="14" height="8" fill="none" stroke="#fff" stroke-width="2"><path d="m1 7 6-6 6 6"/></svg>
        <svg width="18" height="19" style="margin-left:24px" fill="none" stroke="#ddd" stroke-width="1.400"><path d="M3 13.500H1V1h12.500v2.500"/><rect x="4.700" y="5" width="12.600" height="13"/></svg>
        <svg width="16" height="11" style="margin-left:22px"><path d="M5 0h11v11H5z" fill="#76b900"/><path d="M0 5.500C3 1 9 1 12 5.500 9 10 3 10 0 5.500z" fill="#1c3a08" stroke="#76b900"/><circle cx="6" cy="5.500" r="2" fill="none" stroke="#76b900"/></svg>
        <span style="margin-left:28px;width:50px">FRA</span>
        <svg width="19" height="15" fill="none" stroke="#fff" stroke-width="1.700"><path d="M1 5.500c5-5 12-5 17 0" stroke="#666"/><path d="M3.500 8.500c3.500-3.600 8.500-3.600 12 0M6.200 11.500c2-2 4.600-2 6.600 0"/><circle cx="9.500" cy="13.500" r="1" fill="#fff"/></svg>
        <svg width="20" height="16" style="margin-left:10px" fill="none" stroke="#fff" stroke-width="1.500"><path d="M1 5.500h3L8.500 1.500v13L4 10.500H1zM11 5.500q2 2.500 0 5M13.500 3q4 5 0 10"/><path d="M16.500 1.500q4.500 6.500 0 13" stroke="#777"/></svg>
        <svg width="21" height="17" style="margin-left:10px"><rect x="2" y="4.500" width="15" height="10.500" rx="2" fill="none" stroke="#fff" stroke-width="1.600"/><path d="M18 8h2v4h-2M3 7h6v7H3z" fill="#fff"/><path d="M4 0 1 7h3l-1 4 5-6H5l1.500-5z" fill="#fff" stroke="#1c1c1c" stroke-width=".8"/></svg>
        <div class="clock"><div>16:33</div><div>26/02/2025</div></div>
        <svg width="18" height="21" style="margin-left:10px" fill="#fff"><path d="M3 14V9c0-4 3-6 6-6s6 3 6 6v5l2 3H1zM6 18h6c0 3-6 3-6 0z"/><path d="M6 8h5l-5 5.500h5" fill="none" stroke="#1c1c1c" stroke-width="1.300"/><path d="M10.500 0H19v8h-5z" fill="#1c1c1c"/><path d="M12 1.500h4.500L12.500 6.500H17" fill="none" stroke="#fff" stroke-width="1.300"/></svg>
      </div>`;
  }
}

@customElement("app-root")
class AppRoot extends LitElement {
  static styles = css`
    :host { display: block; width: 1918px; height: 1078px; overflow: hidden; background: #f2f2f2; font-family: "Open Sans", sans-serif; }
    .title { box-sizing: border-box; height: 30px; display: flex; align-items: center; gap: 7px; padding: 0 0 1px 2px; background: #f3f3f3; border-bottom: 1px solid #e6e6e6; font-size: 15px; letter-spacing: -.5px; color: #111; }
    .wins { margin-left: auto; display: flex; gap: 47px; padding-right: 24px; align-items: center; }
    .menu { box-sizing: border-box; height: 31px; display: flex; align-items: center; gap: 23.200px; padding: 0 0 2px 20px; background: linear-gradient(#f7f7f7, #e3e3e3); border-bottom: 1px solid #9a9a9a; font-size: 15px; letter-spacing: -.35px; color: #333; }
    .work { display: flex; height: 959px; }
    svg { display: block; }
  `;
  render() {
    return html`
      <div class="title"><svg width="20" height="20" viewBox="0 0 30 30">${flower}</svg><span>AjouterPost.fxml</span>
        <div class="wins"><svg width="12" height="12"><path d="M0 6h12" stroke="#111" stroke-width="1.200"/></svg>
          <svg width="12" height="12" fill="none" stroke="#111" stroke-width="1.300"><rect x=".7" y="2.900" width="8.500" height="8.500" rx="1.500"/><path d="M3 .7h6.500q1.800 0 1.800 1.800V9"/></svg>
          <svg width="12" height="12"><path d="m.5.500 11 11M11.500.500l-11 11" stroke="#111" stroke-width="1.200"/></svg></div></div>
      <div class="menu">${["File", "Edit", "View", "Insert", "Modify", "Arrange", "Preview", "Window", "Help"].map((t) => html`<span>${t}</span>`)}</div>
      <div class="work"><left-dock></left-dock><design-stage></design-stage><inspector-dock></inspector-dock></div>
      <task-bar></task-bar>`;
  }
}
